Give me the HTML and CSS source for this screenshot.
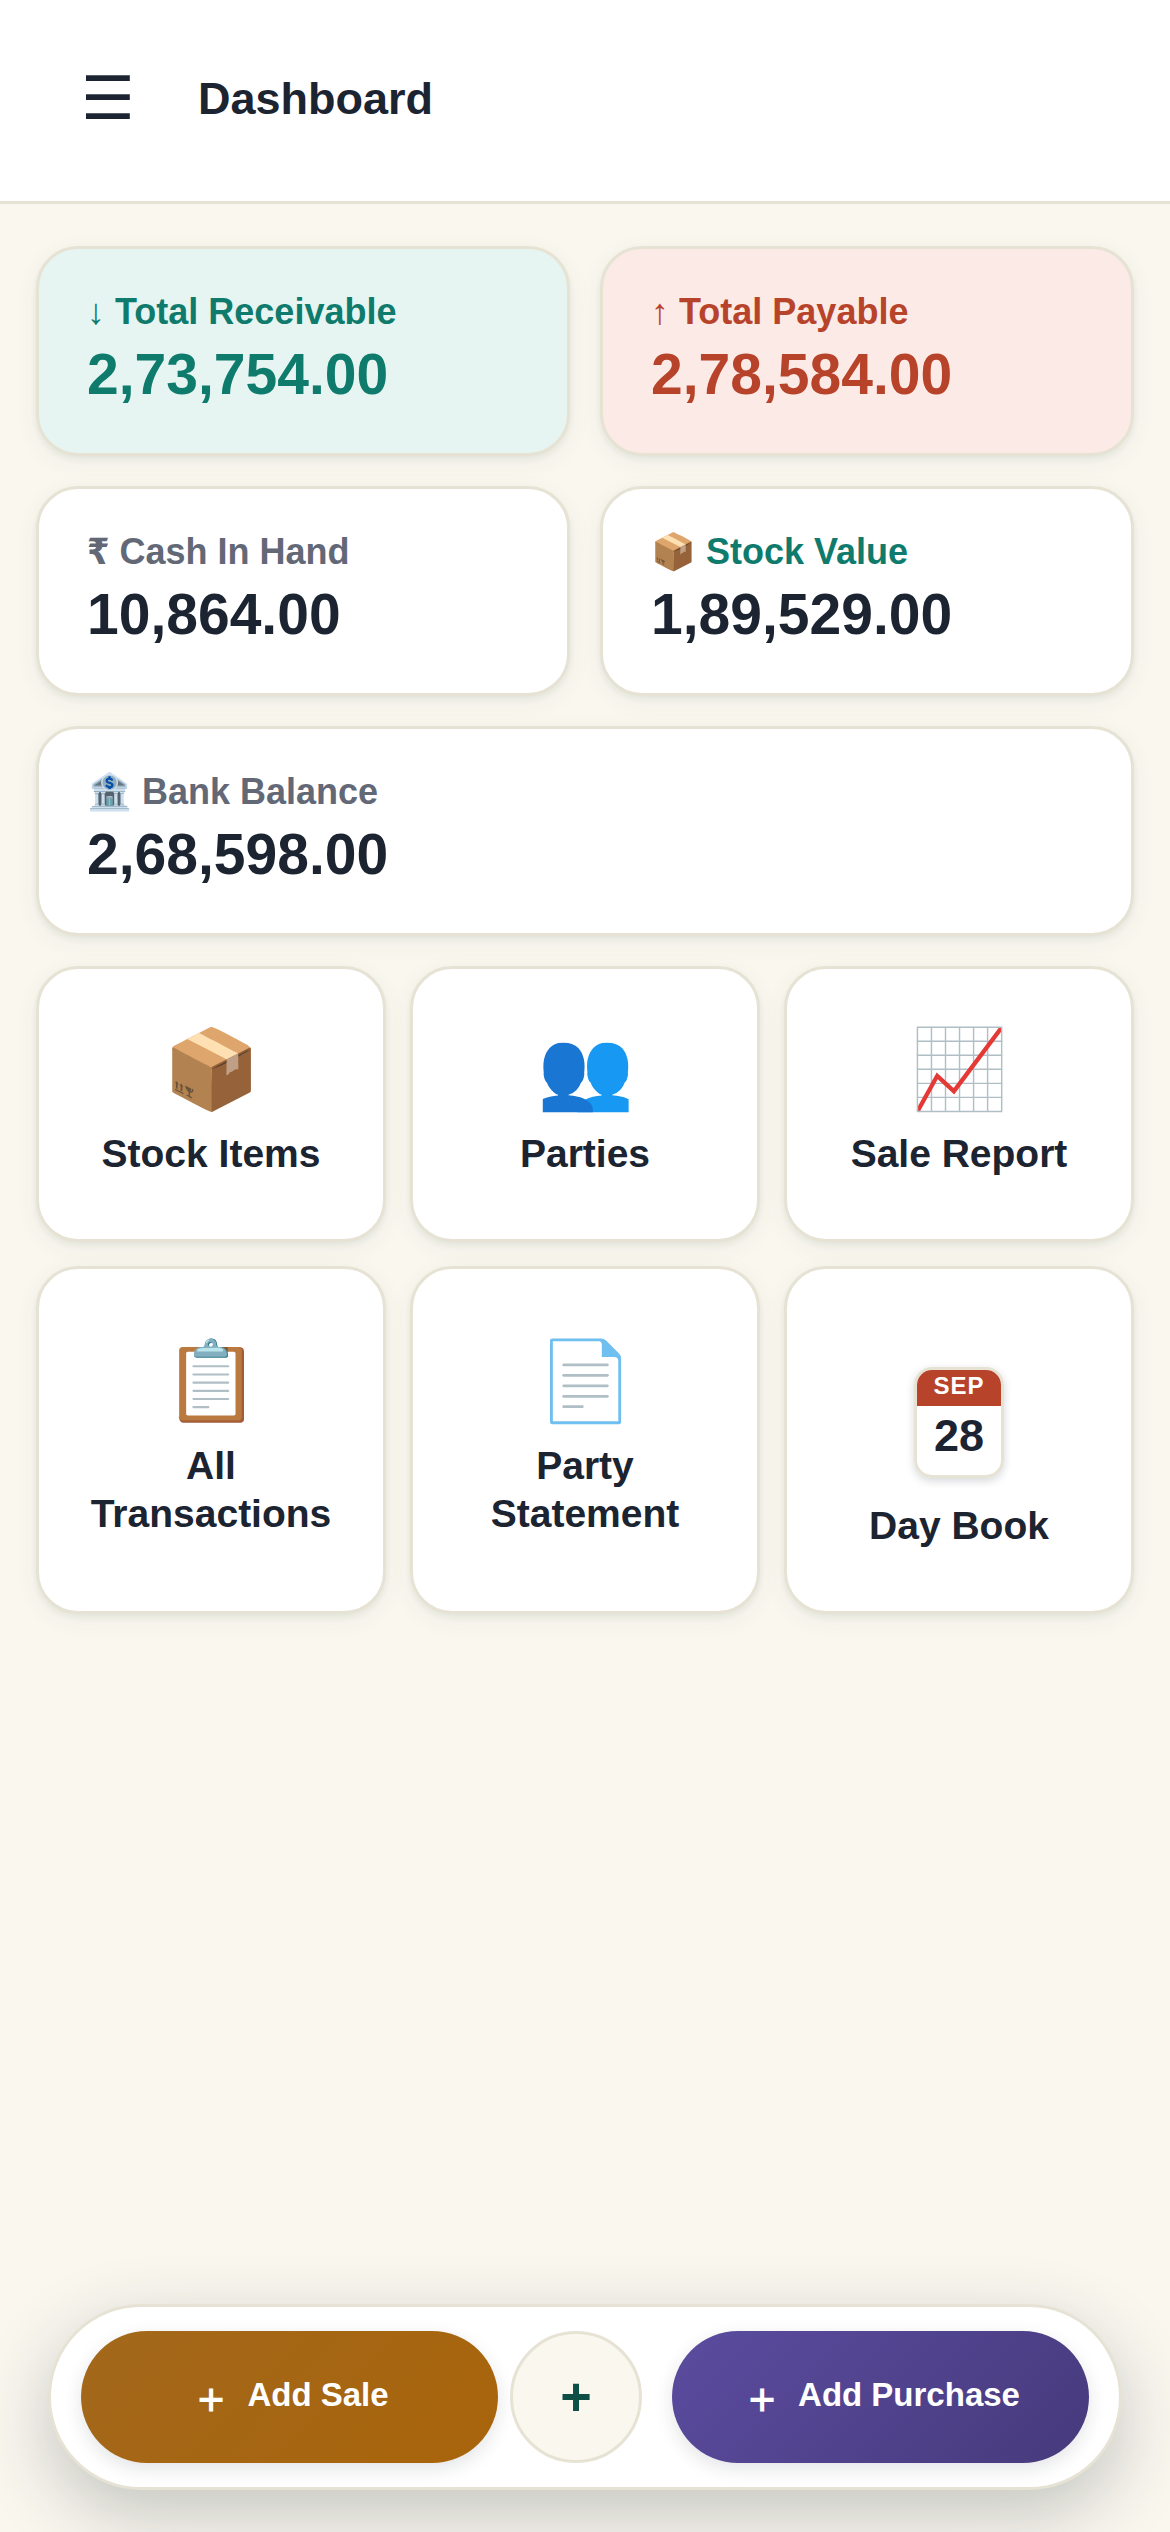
FILE: index.html
```
<!DOCTYPE html>
<html lang="en">
<head>
<meta charset="utf-8">
<meta name="viewport" content="width=device-width, initial-scale=1">
<title>Dashboard</title>
<link rel="stylesheet" href="styles.css">
</head>
<body>
<header class="topbar">
  <button class="menu" aria-label="Menu">☰</button>
  <h1>Dashboard</h1>
</header>
<main class="content">
  <section class="stats">
    <article class="card stat receivable"><h2>↓ Total Receivable</h2><p>2,73,754.00</p></article>
    <article class="card stat payable"><h2>↑ Total Payable</h2><p>2,78,584.00</p></article>
    <article class="card stat"><h2><span class="rupee">₹</span> Cash In Hand</h2><p>10,864.00</p></article>
    <article class="card stat stock"><h2>📦 Stock Value</h2><p>1,89,529.00</p></article>
    <article class="card stat wide"><h2>🏦 Bank Balance</h2><p>2,68,598.00</p></article>
  </section>
  <nav class="tiles">
    <a class="card tile" href="#stock"><span class="icon">📦</span><span>Stock Items</span></a>
    <a class="card tile" href="#parties"><span class="icon">👥</span><span>Parties</span></a>
    <a class="card tile" href="#sales"><span class="icon">📈</span><span>Sale Report</span></a>
    <a class="card tile" href="#transactions"><span class="icon">📋</span><span>All Transactions</span></a>
    <a class="card tile" href="#statement"><span class="icon">📄</span><span>Party Statement</span></a>
    <a class="card tile" href="#daybook"><span class="calendar"><span class="month">SEP</span><span class="day">28</span></span><span>Day Book</span></a>
  </nav>
</main>
<footer class="dock">
  <button class="action sale"><span class="plus">＋</span>Add Sale</button>
  <button class="add" aria-label="Add">+</button>
  <button class="action purchase"><span class="plus">＋</span>Add Purchase</button>
</footer>
</body>
</html>
```
FILE: styles.css
```
* { box-sizing: border-box; }
body {
  margin: 0;
  min-height: 100vh;
  display: flex;
  flex-direction: column;
  background: #faf7ef;
  color: #1b2430;
  font-family: "Liberation Sans", Arial, sans-serif;
}
button { font-family: inherit; border: 0; padding: 0; }
h1, h2, p { margin: 0; }
.topbar {
  height: 204px;
  display: flex;
  align-items: center;
  gap: 42px;
  padding: 0 60px 3px;
  background: #fff;
  border-bottom: 3px solid #e6e3d5;
}
.menu { width: 96px; height: 96px; background: none; color: inherit; font-size: 60px; line-height: 96px; }
h1 { font-size: 45px; line-height: 54px; }
.content { flex: 1; padding: 42px 36px; }
.card {
  background: #fff;
  border: 3px solid #e6e3d5;
  border-radius: 42px;
  box-shadow: 0 3px 6px rgba(15, 60, 50, 0.06), 0 6px 24px rgba(15, 60, 50, 0.06);
}
.stats { display: grid; grid-template-columns: 1fr 1fr; gap: 30px; }
.stat { height: 210px; padding: 42px 48px; }
.stat h2 { font-size: 36px; line-height: 42px; color: #636877; }
.stat p { font-size: 57px; line-height: 66px; margin-top: 8px; font-weight: 700; }
.rupee { font-family: "DejaVu Sans Condensed", "DejaVu Sans", sans-serif; line-height: 1; }
.wide { grid-column: 1 / -1; }
.receivable { background: #e6f5f2; }
.receivable h2, .receivable p, .stock h2 { color: #0f7b6c; }
.payable { background: #fbeae5; }
.payable h2, .payable p { color: #b8432b; }
.tiles { display: grid; grid-template-columns: repeat(3, 1fr); grid-template-rows: 276px 348px; gap: 24px; margin-top: 30px; }
.tile {
  display: flex;
  flex-direction: column;
  align-items: center;
  justify-content: center;
  gap: 16px;
  color: inherit;
  text-align: center;
  text-decoration: none;
  font-size: 39px;
  line-height: 48px;
  font-weight: 700;
  padding: 30px 30px 36px;
}
.icon { font-size: 78px; line-height: 90px; font-weight: 400; }
.calendar { width: 90px; height: 111px; margin: 42px 0 8px; display: flex; flex-direction: column; border: 3px solid #e6e3d5; border-radius: 18px; overflow: hidden; box-shadow: 0 3px 9px rgba(27, 36, 48, 0.18); }
.month { padding-bottom: 4px; background: #b8432b; color: #fff; font-size: 24px; line-height: 32px; letter-spacing: 1px; }
.day { font-size: 45px; line-height: 60px; }
.dock {
  position: sticky;
  bottom: 42px;
  margin: 0 48px 42px;
  height: 186px;
  display: flex;
  align-items: center;
  gap: 12px;
  padding: 0 30px;
  background: #fff;
  border: 3px solid #e6e3d5;
  border-radius: 93px;
  box-shadow: 0 24px 72px rgba(27, 36, 48, 0.24);
}
.action { flex: 1; height: 132px; padding-bottom: 4px; border-radius: 66px; color: #fff; font-size: 33px; font-weight: 700; display: flex; align-items: center; justify-content: center; gap: 15px; box-shadow: 0 6px 18px rgba(27, 36, 48, 0.12); }
.plus { padding-top: 6px; font-size: 42px; line-height: 48px; }
.sale { background: linear-gradient(135deg, #a3681c, #a8640a); }
.purchase { background: linear-gradient(135deg, #5b4c9f, #463a7c); }
.add { width: 132px; height: 132px; padding-bottom: 3px; margin-right: 18px; border: 3px solid #e6e3d5; border-radius: 50%; background: #faf7ef; color: #0d4f45; font-size: 54px; font-weight: 700; }
```
